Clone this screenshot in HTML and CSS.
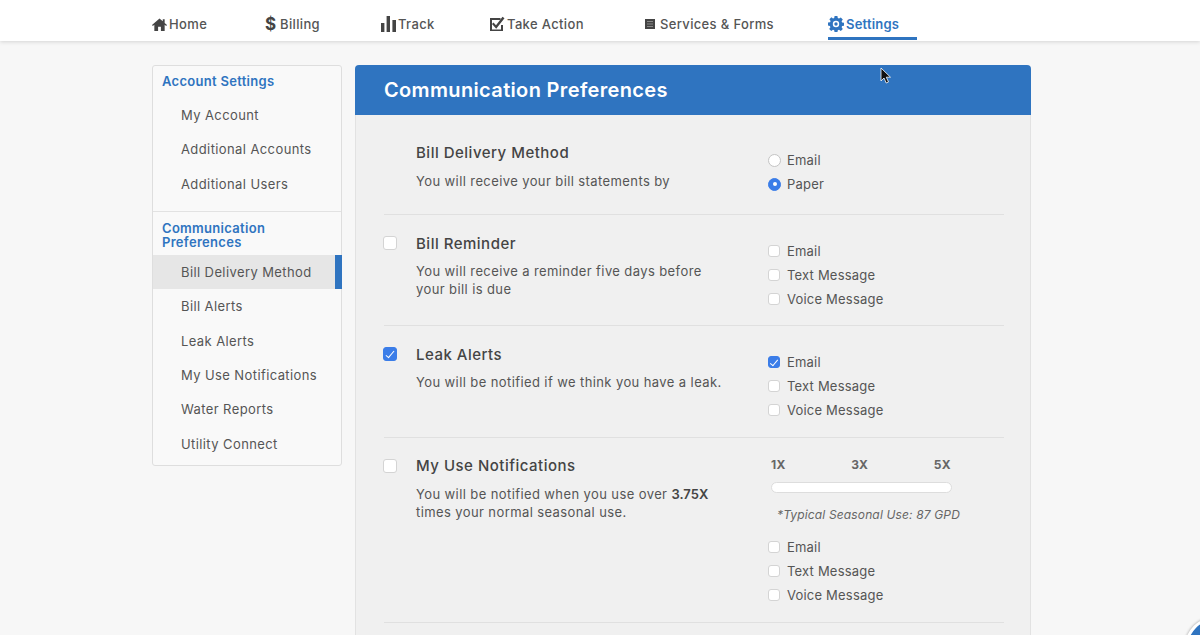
FILE: index.html
```html
<!DOCTYPE html>
<html lang="en">
<head>
    <meta charset="UTF-8">
    <meta name="viewport" content="width=device-width, initial-scale=1.0">
    <title>Communication Preferences</title>
    <link rel="stylesheet" href="styles.css">
</head>
<body class="mainBody">
    <nav class="topNav">
        <a class="navItem">
            <svg class="navIcon" width="15" height="15" viewBox="0 0 16 16"><path d="M8 1.500 0 8.600l.9 1L2.500 8.300V15h4v-4.500h3V15h4V8.300l1.600 1.300.9-1-2.500-2.200V2.500h-2v2.100z"/></svg>
            Home
        </a>
        <a class="navItem">
            <span class="dollar">$</span>
            Billing
        </a>
        <a class="navItem">
            <svg class="navIcon" width="15" height="16" viewBox="0 0 15 16"><path d="M0 7h3.400v9H0zM5.600 0H9v16H5.600zM11.400 4H15v12h-3.600z"/></svg>
            Track
        </a>
        <a class="navItem">
            <svg class="navIcon" width="16" height="16" viewBox="0 0 16 16"><path d="M1 2h10.500v2H3v9.500h9V9h2v6H1z"/><path d="M4.500 6.500 7 9.200 13.500.8l2 1.500-8.300 10.500L3 8z"/></svg>
            Take Action
        </a>
        <a class="navItem">
            <svg class="navIcon formsIcon" width="10" height="10" viewBox="0 0 10 10"><path d="M0 0h10v10H0z"/><path d="M2 2.500h6M2 5h6M2 7.500h6" stroke="#9a9a9a" stroke-width=".8"/></svg>
            Services &amp; Forms
        </a>
        <a class="navItem navItemActive">
            <svg class="navIcon" width="16" height="16" viewBox="0 0 16 16"><path fill-rule="evenodd" d="M6.600 0h2.800l.4 2.100 1.200.5 1.800-1.200 2 2-1.200 1.800.5 1.200 2.100.4v2.800l-2.100.4-.5 1.200 1.200 1.800-2 2-1.800-1.200-1.200.5-.4 2.100H6.600l-.4-2.100-1.200-.5-1.800 1.200-2-2 1.200-1.800-.5-1.200L0 9.400V6.600l2.100-.4.500-1.200-1.200-1.800 2-2L5 2.600l1.200-.5zM8 4.800a3.200 3.200 0 1 0 0 6.400 3.200 3.200 0 0 0 0-6.400zM8 6.300a1.700 1.700 0 1 1 0 3.400 1.700 1.700 0 0 1 0-3.400z"/></svg>
            Settings
        </a>
    </nav>

    <div class="pageBody">
        <aside class="sideMenu">
            <div class="menuGroup">
                <h3 class="menuTitle">Account Settings</h3>
                <a class="menuLink">My Account</a>
                <a class="menuLink">Additional Accounts</a>
                <a class="menuLink">Additional Users</a>
            </div>
            <div class="menuGroup menuGroupLast">
                <h3 class="menuTitle menuTitleTall">Communication Preferences</h3>
                <a class="menuLink menuLinkActive">Bill Delivery Method</a>
                <a class="menuLink">Bill Alerts</a>
                <a class="menuLink">Leak Alerts</a>
                <a class="menuLink">My Use Notifications</a>
                <a class="menuLink">Water Reports</a>
                <a class="menuLink">Utility Connect</a>
            </div>
        </aside>

        <main class="prefPanel">
            <div class="panelHeader">
                <h1>Communication Preferences</h1>
            </div>
            <div class="panelBody">
                <section class="prefRow rowDelivery">
                    <div class="rowToggle"></div>
                    <div class="rowText">
                        <h2>Bill Delivery Method</h2>
                        <p>You will receive your bill statements by</p>
                    </div>
                    <div class="rowOptions">
                        <label class="option"><input type="radio" name="delivery">Email</label>
                        <label class="option"><input type="radio" name="delivery" checked>Paper</label>
                    </div>
                </section>

                <section class="prefRow rowReminder">
                    <div class="rowToggle"><input class="bigCheck" type="checkbox"></div>
                    <div class="rowText">
                        <h2>Bill Reminder</h2>
                        <p>You will receive a reminder five days before your bill is due</p>
                    </div>
                    <div class="rowOptions">
                        <label class="option"><input type="checkbox">Email</label>
                        <label class="option"><input type="checkbox">Text Message</label>
                        <label class="option"><input type="checkbox">Voice Message</label>
                    </div>
                </section>

                <section class="prefRow rowLeak">
                    <div class="rowToggle"><input class="bigCheck" type="checkbox" checked></div>
                    <div class="rowText">
                        <h2>Leak Alerts</h2>
                        <p>You will be notified if we think you have a leak.</p>
                    </div>
                    <div class="rowOptions">
                        <label class="option"><input type="checkbox" checked>Email</label>
                        <label class="option"><input type="checkbox">Text Message</label>
                        <label class="option"><input type="checkbox">Voice Message</label>
                    </div>
                </section>

                <section class="prefRow rowUse">
                    <div class="rowToggle"><input class="bigCheck" type="checkbox"></div>
                    <div class="rowText">
                        <h2>My Use Notifications</h2>
                        <p>You will be notified when you use over <b>3.75X</b> times your normal seasonal use.</p>
                    </div>
                    <div class="rowOptions">
                        <div class="scaleLabels"><span>1X</span><span>3X</span><span>5X</span></div>
                        <div class="scaleTrack"></div>
                        <p class="scaleNote">*Typical Seasonal Use: 87 GPD</p>
                        <label class="option"><input type="checkbox">Email</label>
                        <label class="option"><input type="checkbox">Text Message</label>
                        <label class="option"><input type="checkbox">Voice Message</label>
                    </div>
                </section>
            </div>
        </main>
    </div>

    <svg class="cursor" width="12" height="18" viewBox="0 0 12 18"><path d="M1 1v13l3-3 2.200 5 2.300-1-2.200-4.800h4.200z" fill="#111" stroke="#fff" stroke-width=".8"/></svg>
    <div class="chatCorner"><div class="chatBubble"></div></div>
</body>
</html>
```

FILE: styles.css
```css
* {
    box-sizing: border-box;
}
html, body {
    height: 100%;
    margin: 0;
    overflow: hidden;
}
.mainBody {
    position: relative;
    font-family: Inter, "Open Sans", Arial, sans-serif;
    color: #555;
    background-color: #f7f7f7;
}

/* top nav */
.topNav {
    display: grid;
    grid-template-columns: 113px 116px 108px 156px 183px 89px;
    height: 41px;
    padding-left: 152px;
    background-color: #fff;
    box-shadow: 0 1px 4px rgba(0, 0, 0, 0.14);
}
.navItem {
    display: flex;
    align-items: center;
    gap: 2px;
    height: 40px;
    padding-top: 8px;
    font-size: 13px;
    font-weight: 500;
    letter-spacing: 0.35px;
    color: #555;
}
.navIcon {
    flex: none;
    fill: #444;
}
.formsIcon {
    margin-right: 3px;
}
.dollar {
    width: 13px;
    font-size: 17px;
    font-weight: 700;
    color: #444;
}
.navItemActive {
    padding-top: 11px;
    color: #2f74c0;
    font-weight: 600;
    letter-spacing: 0.2px;
    border-bottom: 3px solid #2f74c0;
}
.navItemActive .navIcon {
    fill: #2f74c0;
}

/* page columns */
.pageBody {
    display: flex;
    align-items: stretch;
    gap: 13px;
    height: calc(100% - 41px);
    padding: 24px 0 0 152px;
}

/* side menu */
.sideMenu {
    align-self: flex-start;
    width: 190px;
    height: 401px;
    background-color: #f9f9f9;
    border: 1px solid #dedede;
    border-radius: 3px;
}
.menuGroup {
    height: 146px;
    border-bottom: 1px solid #e2e2e2;
}
.menuGroupLast {
    height: auto;
    border-bottom: none;
}
.menuTitle {
    margin: 0;
    padding: 7px 8px 0 9px;
    height: 32px;
    font-size: 13px;
    line-height: 17px;
    font-weight: 600;
    letter-spacing: 0.3px;
    color: #2f74c0;
}
.menuTitleTall {
    height: 43px;
    padding-top: 9px;
    line-height: 14px;
}
.menuLink {
    display: flex;
    align-items: center;
    height: 34.3px;
    padding-left: 28px;
    font-size: 13px;
    letter-spacing: 0.4px;
    color: #555;
}
.menuLinkActive {
    margin-right: -1px;
    background-color: #e6e6e6;
    border-right: 7px solid #2f74c0;
}

/* main panel */
.prefPanel {
    display: flex;
    flex-direction: column;
    flex: none;
    width: 676px;
}
.panelHeader {
    display: flex;
    align-items: center;
    flex: none;
    height: 50px;
    padding: 0 29px;
    background-color: #2f74c0;
    border-radius: 4px 4px 0 0;
}
.panelHeader h1 {
    margin: 0;
    font-size: 20px;
    font-weight: 600;
    letter-spacing: 0.35px;
    color: #fff;
}
.panelBody {
    flex: 1;
    padding: 0 26px 0 29px;
    background-color: #f0f0f0;
    border-left: 1px solid #e2e2e2;
    border-right: 1px solid #e2e2e2;
}
.prefRow {
    display: grid;
    grid-template-columns: 32px 352px 1fr;
    margin-left: -1px;
    border-bottom: 1px solid #e0e0e0;
}
.rowDelivery {
    height: 100px;
    padding-top: 29px;
}
.rowReminder {
    height: 111px;
    padding-top: 20px;
}
.rowLeak {
    height: 112px;
    padding-top: 20px;
}
.rowUse {
    height: 185px;
    padding-top: 19px;
}
.rowToggle {
    margin-left: -1px;
    padding-top: 2px;
}
.rowReminder .rowToggle,
.rowLeak .rowToggle {
    padding-top: 1px;
}
.rowText h2 {
    margin: 0;
    font-size: 15px;
    line-height: 18px;
    font-weight: 500;
    letter-spacing: 0.5px;
    color: #444;
}
.rowText p {
    width: 310px;
    margin: 10px 0 0;
    font-size: 13px;
    line-height: 18px;
    letter-spacing: 0.4px;
    color: #555;
}
.rowReminder .rowText p,
.rowLeak .rowText p {
    margin-top: 9px;
}
.rowText b {
    font-weight: 600;
    letter-spacing: 0;
    color: #444;
}
.rowOptions {
    margin-top: 4px;
}
.rowUse .rowOptions {
    margin-top: 1px;
}
.option {
    display: flex;
    align-items: center;
    gap: 7px;
    height: 24px;
    font-size: 13px;
    letter-spacing: 0.2px;
    color: #555;
}

/* inputs */
input {
    appearance: none;
    position: relative;
    flex: none;
    margin: 0;
    width: 12px;
    height: 12px;
    background-color: #fff;
    border: 1px solid #d4d4d4;
    border-radius: 3px;
}
input[type="radio"] {
    width: 13px;
    height: 13px;
    border-radius: 50%;
    border-color: #c4c4c4;
}
.option input[type="radio"] {
    margin-right: -1px;
}
input[type="radio"]:checked {
    background-color: #3b7de8;
    border-color: #3b7de8;
}
input[type="radio"]:checked::after {
    content: "";
    position: absolute;
    left: 3.5px;
    top: 3.5px;
    width: 4px;
    height: 4px;
    border-radius: 50%;
    background-color: #fff;
}
input[type="checkbox"]:checked {
    background-color: #3b7de8;
    border-color: #3b7de8;
}
input[type="checkbox"]:checked::after {
    content: "";
    position: absolute;
    left: 3px;
    top: 0.5px;
    width: 3px;
    height: 7px;
    border: solid #fff;
    border-width: 0 1.5px 1.5px 0;
    transform: rotate(40deg);
}
input.bigCheck {
    display: block;
    width: 14px;
    height: 14px;
}
input.bigCheck:checked::after {
    left: 4px;
    top: 1px;
    height: 8px;
}

/* usage scale */
.scaleLabels {
    display: flex;
    justify-content: space-between;
    width: 180px;
    margin-left: 3px;
    font-size: 12px;
    line-height: 14px;
    font-weight: 700;
    letter-spacing: 0.3px;
    color: #666;
}
.scaleTrack {
    width: 181px;
    height: 11px;
    margin: 10px 0 0 3px;
    background-color: #fff;
    border: 1px solid #ddd;
    border-radius: 6px;
}
.scaleNote {
    margin: 14px 0 12px 9px;
    font-size: 12px;
    line-height: 16px;
    font-style: italic;
    letter-spacing: 0.15px;
    color: #666;
}

/* things over the page */
.cursor {
    position: absolute;
    left: 880px;
    top: 67px;
}
.chatCorner {
    position: absolute;
    right: 0;
    bottom: 0;
    width: 20px;
    height: 20px;
    overflow: hidden;
}
.chatBubble {
    width: 60px;
    height: 60px;
    margin: 2px 0 0 5px;
    background-color: #2f74c0;
    border: 3px solid #fff;
    border-radius: 50%;
    box-shadow: 0 0 3px rgba(0, 0, 0, 0.4);
}
```
